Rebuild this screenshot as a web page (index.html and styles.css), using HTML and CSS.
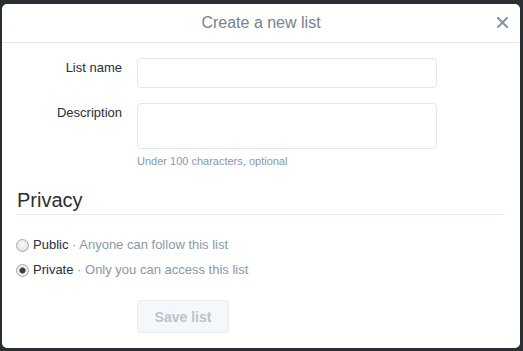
FILE: index.html
```html
<html lang="en">
<head>
    <meta charset="UTF-8">
    <meta name="viewport" content="width=device-width, initial-scale=1.0">
    <title>Create a new list</title>
    <link rel="stylesheet" href="styles.css">
</head>
<body>
    <div class="modal" role="dialog" aria-labelledby="list-dialog-title">
        <div class="modal-header">
            <h3 class="modal-title" id="list-dialog-title">Create a new list</h3>
            <button class="modal-close" type="button" aria-label="Close">
                <svg width="11" height="11" viewBox="0 0 11 11" aria-hidden="true">
                    <path d="M1 1L10 10M10 1L1 10" stroke="currentColor" stroke-width="2.2" stroke-linecap="square" fill="none"/>
                </svg>
            </button>
        </div>
        <form class="modal-body">
            <div class="field">
                <label class="field-label" for="list-name">List name</label>
                <div class="field-control">
                    <input type="text" class="input" id="list-name">
                </div>
            </div>
            <div class="field">
                <label class="field-label" for="list-description">Description</label>
                <div class="field-control">
                    <textarea class="input textarea" id="list-description"></textarea>
                    <p class="help">Under 100 characters, optional</p>
                </div>
            </div>

            <h2 class="section-title">Privacy</h2>
            <div class="radio-list">
                <label class="radio">
                    <input type="radio" name="mode" value="public">
                    <span>Public <span class="radio-note">&middot; Anyone can follow this list</span></span>
                </label>
                <label class="radio">
                    <input type="radio" name="mode" value="private" checked>
                    <span>Private <span class="radio-note">&middot; Only you can access this list</span></span>
                </label>
            </div>

            <div class="actions">
                <button class="button" type="submit" disabled>Save list</button>
            </div>
        </form>
    </div>
</body>
</html>
```

FILE: styles.css
```css
:root {
    --overlay-bg: #2a2f33;
    --modal-bg: #ffffff;
    --border-color: #e1e8ed;
    --text-color: #292f33;
    --muted-color: #8899a6;
    --title-color: #75838e;
}
body {
    font-family: "Liberation Sans", Arial, sans-serif;
    background-color: var(--overlay-bg);
    color: var(--text-color);
    margin: 0;
    padding: 4px 3px 3px 2px;
    height: 100vh;
    box-sizing: border-box;
}
.modal {
    background-color: var(--modal-bg);
    border-radius: 5px;
    height: 100%;
    box-sizing: border-box;
}
.modal-header {
    display: flex;
    align-items: center;
    justify-content: center;
    position: relative;
    height: 38px;
    border-bottom: 1px solid var(--border-color);
}
.modal-title {
    margin: 0;
    font-size: 16px;
    font-weight: normal;
    line-height: 38px;
    color: var(--title-color);
}
.modal-close {
    position: absolute;
    right: 12px;
    top: 13px;
    padding: 0;
    border: none;
    background: none;
    color: var(--muted-color);
    line-height: 0;
    cursor: pointer;
}
.modal-body {
    margin: 0;
    padding: 15px;
}
.field {
    display: grid;
    grid-template-columns: 105px 300px;
    column-gap: 15px;
    margin-bottom: 15px;
}
.field-label {
    text-align: right;
    font-size: 13px;
    line-height: 18px;
    padding-top: 1px;
}
.input {
    display: block;
    width: 300px;
    height: 30px;
    margin: 0;
    padding: 5px 8px;
    box-sizing: border-box;
    border: 1px solid var(--border-color);
    border-radius: 4px;
    font: inherit;
    font-size: 13px;
    background-color: #fff;
    outline: none;
}
.textarea {
    height: 46px;
    resize: none;
}
.help {
    margin: 5px 0 0;
    font-size: 11px;
    line-height: 15px;
    color: var(--muted-color);
}
.section-title {
    margin: 19px 0 0;
    padding-bottom: 2px;
    border-bottom: 1px solid var(--border-color);
    font-size: 20px;
    font-weight: normal;
    line-height: 24px;
}
.radio-list {
    display: flex;
    flex-direction: column;
    gap: 7px;
    margin-top: 21px;
}
.radio {
    display: flex;
    align-items: center;
    font-size: 13px;
    line-height: 18px;
}
.radio input {
    appearance: none;
    width: 13px;
    height: 13px;
    margin: 0 4px 0 -1px;
    border: 1px solid #a6a6a6;
    border-radius: 50%;
    background: radial-gradient(circle at 50% 40%, #fafafa, #dcdcdc);
    box-sizing: border-box;
}
.radio input:checked {
    background: radial-gradient(circle, #3f3f3f 0 2.5px, #8a8a8a 3px, #f2f2f2 3.5px, #dcdcdc);
}
.radio-note {
    color: var(--muted-color);
}
.actions {
    margin-top: 21px;
    padding-left: 120px;
}
.button {
    width: 92px;
    height: 33px;
    padding: 0;
    border: 1px solid #e6ecf0;
    border-radius: 4px;
    background-color: #f5f8fa;
    color: #b8c4cd;
    font-family: inherit;
    font-size: 14px;
    font-weight: bold;
}
```
